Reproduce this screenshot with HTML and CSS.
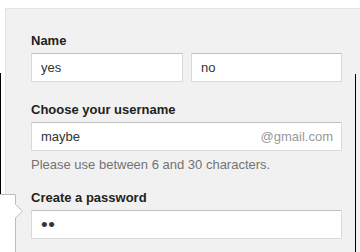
FILE: index.html
```html
<!DOCTYPE html>
<html lang="en">
<head>
  <meta charset="UTF-8">
  <meta name="viewport" content="width=device-width, initial-scale=1.0">
  <title>Create your Google Account</title>
  <link rel="stylesheet" href="styles.css">
</head>
<body>
  <div class="signup-panel">
    <div class="field">
      <label class="field-label" for="firstName">Name</label>
      <div class="name-row">
        <input class="text-input first-name" id="firstName" type="text" value="yes">
        <input class="text-input" id="lastName" type="text" value="no">
      </div>
    </div>

    <div class="field field-hinted">
      <label class="field-label" for="username">Choose your username</label>
      <div class="username-wrap">
        <input class="text-input" id="username" type="text" value="maybe">
        <span class="domain-suffix">@gmail.com</span>
      </div>
      <p class="hint">Please use between 6 and 30 characters.</p>
    </div>

    <div class="field">
      <label class="field-label" for="password">Create a password</label>
      <input class="text-input password-input" id="password" type="password" value="ab">
    </div>
  </div>

  <!-- edges of the neighbouring bubbles -->
  <div class="bubble-edge-left"></div>
  <div class="bubble-edge-right"></div>
  <svg class="error-bubble" width="30" height="60" viewBox="0 0 30 60">
    <path d="M-2 0.5 H15.5 V10.5 L22.5 17 L15.5 24 V60 H-2 Z" fill="#fff" stroke="#bdbdbd" stroke-width="1"/>
  </svg>
</body>
</html>
```

FILE: styles.css
```css
html, body {
  overflow: hidden;
}
body {
  margin: 0;
  background: #fff;
  font-family: Arial, "Liberation Sans", sans-serif;
  font-size: 13px;
  color: #222;
}
.signup-panel {
  margin: 8px 0 0 5px;
  padding: 24px 0 20px 25px;
  background: #f1f1f1;
  border-top: 1px solid #e5e5e5;
  border-left: 1px solid #e5e5e5;
}
.field {
  width: 311px;
  margin-bottom: 20px;
}
.field-hinted {
  margin-bottom: 17px;
}
.field-label {
  display: block;
  font-weight: bold;
  line-height: 16px;
  margin-bottom: 4px;
}
.name-row {
  display: flex;
  gap: 8px;
}
.text-input {
  display: block;
  box-sizing: border-box;
  width: 100%;
  height: 29px;
  margin: 0;
  padding: 0 9px;
  border: 1px solid #d9d9d9;
  border-top-color: #c0c0c0;
  border-radius: 1px;
  background: #fff;
  font-family: Arial, "Liberation Sans", sans-serif;
  font-size: 13px;
  color: #333;
  outline: none;
}
.name-row .text-input {
  width: 151px;
}
.name-row .first-name {
  width: 152px;
}
.password-input {
  font-size: 19px;
  letter-spacing: 0.5px;
}
.username-wrap {
  position: relative;
}
.domain-suffix {
  position: absolute;
  right: 9px;
  top: 0;
  line-height: 29px;
  font-size: 13px;
  color: #999;
}
.hint {
  margin: 6px 0 0;
  line-height: 16px;
  color: #737373;
}
.bubble-edge-left {
  position: absolute;
  left: 0;
  top: 73px;
  width: 0;
  height: 121px;
  border-left: 1px solid #000;
}
.bubble-edge-right {
  position: absolute;
  left: 355px;
  top: 74px;
  width: 0;
  height: 200px;
  border-left: 1px solid #000;
}
.error-bubble {
  position: absolute;
  left: 0;
  top: 194px;
  display: block;
}
```
